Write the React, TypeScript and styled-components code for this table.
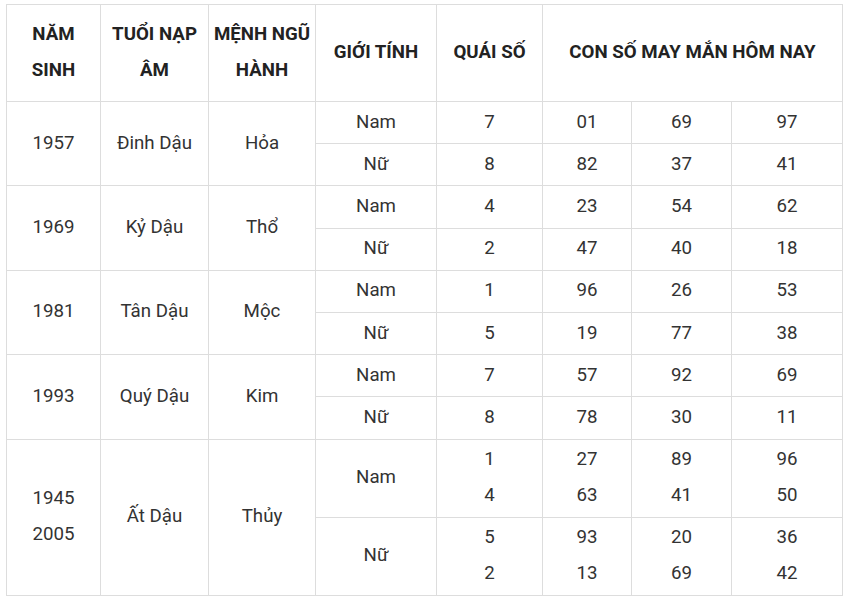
import React from "react";
import styled, { createGlobalStyle } from "styled-components";

const Global = createGlobalStyle`
  html, body { margin: 0; padding: 0; background: #fff; }
  body { font-family: Roboto, "Noto Sans", Arial, sans-serif; }
`;

const Page = styled.div`
  padding: 4px 6px;
`;

const Table = styled.table`
  border-collapse: collapse;
  table-layout: fixed;
  width: 836px;
  color: #333;
  font-size: 18.7px;
`;

const Th = styled.th`
  border: 1px solid #ddd;
  padding: 11px 3px 13px;
  line-height: 36px;
  font-weight: 700;
  color: #222;
  text-align: center;
  vertical-align: middle;
`;

const Td = styled.td`
  border: 1px solid #ddd;
  padding: 1.6px 3px 3.6px;
  line-height: 36px;
  font-weight: 400;
  text-align: center;
  vertical-align: middle;
`;

const widths = [94, 108, 107, 121, 106, 89, 100, 111];

type Sub = { gender: string; quai: string[]; nums: string[][] };
type Group = { years: string[]; tuoi: string; menh: string; subs: Sub[] };

const data: Group[] = [
  {
    years: ["1957"],
    tuoi: "Đinh Dậu",
    menh: "Hỏa",
    subs: [
      { gender: "Nam", quai: ["7"], nums: [["01", "69", "97"]] },
      { gender: "Nữ", quai: ["8"], nums: [["82", "37", "41"]] },
    ],
  },
  {
    years: ["1969"],
    tuoi: "Kỷ Dậu",
    menh: "Thổ",
    subs: [
      { gender: "Nam", quai: ["4"], nums: [["23", "54", "62"]] },
      { gender: "Nữ", quai: ["2"], nums: [["47", "40", "18"]] },
    ],
  },
  {
    years: ["1981"],
    tuoi: "Tân Dậu",
    menh: "Mộc",
    subs: [
      { gender: "Nam", quai: ["1"], nums: [["96", "26", "53"]] },
      { gender: "Nữ", quai: ["5"], nums: [["19", "77", "38"]] },
    ],
  },
  {
    years: ["1993"],
    tuoi: "Quý Dậu",
    menh: "Kim",
    subs: [
      { gender: "Nam", quai: ["7"], nums: [["57", "92", "69"]] },
      { gender: "Nữ", quai: ["8"], nums: [["78", "30", "11"]] },
    ],
  },
  {
    years: ["1945", "2005"],
    tuoi: "Ất Dậu",
    menh: "Thủy",
    subs: [
      {
        gender: "Nam",
        quai: ["1", "4"],
        nums: [
          ["27", "89", "96"],
          ["63", "41", "50"],
        ],
      },
      {
        gender: "Nữ",
        quai: ["5", "2"],
        nums: [
          ["93", "20", "36"],
          ["13", "69", "42"],
        ],
      },
    ],
  },
];

const Lines: React.FC<{ items: string[] }> = ({ items }) => (
  <>
    {items.map((t, i) => (
      <React.Fragment key={i}>
        {i > 0 && <br />}
        {t}
      </React.Fragment>
    ))}
  </>
);

export default function App() {
  return (
    <Page>
      <Global />
      <Table>
        <colgroup>
          {widths.map((w, i) => (
            <col key={i} style={{ width: w }} />
          ))}
        </colgroup>
        <thead>
          <tr>
            <Th>
              NĂM
              <br />
              SINH
            </Th>
            <Th>
              TUỔI NẠP
              <br />
              ÂM
            </Th>
            <Th>
              MỆNH NGŨ
              <br />
              HÀNH
            </Th>
            <Th>GIỚI TÍNH</Th>
            <Th>QUÁI SỐ</Th>
            <Th colSpan={3}>CON SỐ MAY MẮN HÔM NAY</Th>
          </tr>
        </thead>
        <tbody>
          {data.map((g, gi) =>
            g.subs.map((s, si) => (
              <tr key={`${gi}-${si}`}>
                {si === 0 && (
                  <>
                    <Td rowSpan={g.subs.length}>
                      <Lines items={g.years} />
                    </Td>
                    <Td rowSpan={g.subs.length}>{g.tuoi}</Td>
                    <Td rowSpan={g.subs.length}>{g.menh}</Td>
                  </>
                )}
                <Td>{s.gender}</Td>
                <Td>
                  <Lines items={s.quai} />
                </Td>
                {[0, 1, 2].map((c) => (
                  <Td key={c}>
                    <Lines items={s.nums.map((r) => r[c])} />
                  </Td>
                ))}
              </tr>
            ))
          )}
        </tbody>
      </Table>
    </Page>
  );
}
